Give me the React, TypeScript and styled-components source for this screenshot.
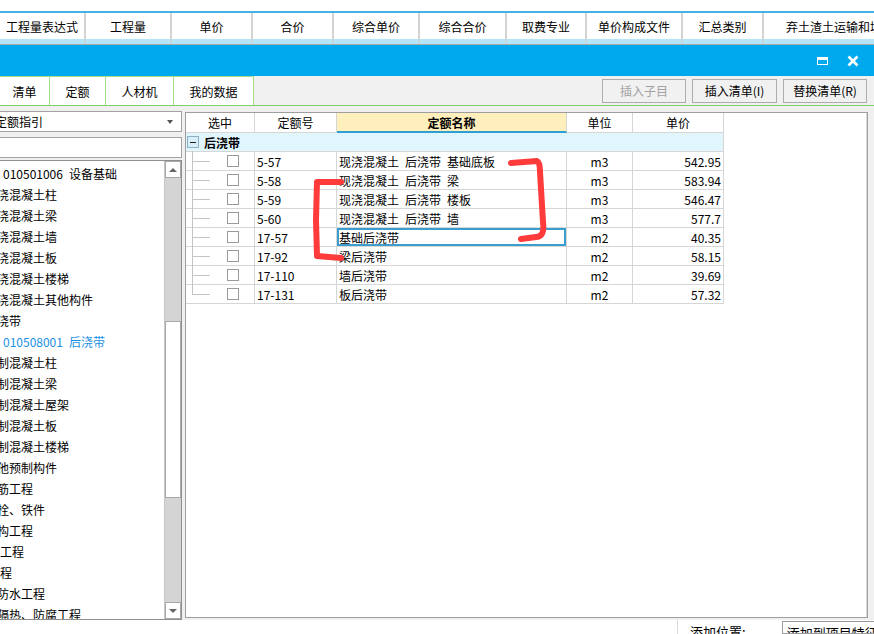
import React from 'react'
import styled, { createGlobalStyle } from 'styled-components'

const GlobalStyle = createGlobalStyle`
  html, body {
    margin: 0;
    padding: 0;
    background: #fff;
  }
  body {
    font-family: "Noto Sans CJK SC", "Noto Sans", sans-serif;
    font-size: 12px;
    color: #000;
    overflow: hidden;
  }
  * {
    box-sizing: border-box;
  }
`

const Page = styled.div`
  position: relative;
  width: 874px;
  height: 634px;
  overflow: hidden;
  display: flex;
  flex-direction: column;
  background: #fff;
`

const TopGap = styled.div`
  height: 11px;
  flex: none;
`

const GridHead = styled.div`
  flex: none;
  border-top: 2px solid #41b3e4;
  border-bottom: 1px solid #a9a9a9;
`

const HeadRow = styled.div`
  display: flex;
  height: 26px;
`

const HeadCell = styled.div<{ $w: number; $left?: boolean }>`
  flex: 0 0 ${p => p.$w}px;
  border-right: 2px solid #d3d3d3;
  display: flex;
  align-items: center;
  justify-content: ${p => (p.$left ? 'flex-start' : 'center')};
  padding-left: ${p => (p.$left ? '22px' : '0')};
  white-space: nowrap;
  overflow: hidden;
`

const StripRow = styled.div`
  display: flex;
  height: 5px;
  background: #b5e6f8;
`

const StripCell = styled.div<{ $w: number }>`
  flex: 0 0 ${p => p.$w}px;
  border-right: 2px solid #c9d6dc;
`

const TitleBar = styled.div`
  flex: none;
  height: 31px;
  background: #00a9ee;
  display: flex;
  align-items: center;
  justify-content: flex-end;
  gap: 19px;
  padding-right: 15px;
`

const MaxIcon = styled.span`
  width: 11px;
  height: 8px;
  border: 1.5px solid #fff;
  border-top-width: 3px;
`

const TabBar = styled.div`
  flex: none;
  height: 30px;
  display: flex;
  background: #f0f0f0;
  border-bottom: 1px solid #7fcf6a;
`

const Tab = styled.div<{ $w: number }>`
  width: ${p => p.$w}px;
  background: #fff;
  border-top: 1px solid #a4e08c;
  border-right: 1px solid #a4e08c;
  display: flex;
  align-items: center;
  justify-content: center;
`

const ButtonGroup = styled.div`
  margin-left: auto;
  display: flex;
  gap: 6px;
  padding-right: 7px;
  align-items: center;
`

const ToolButton = styled.button<{ $w: number }>`
  width: ${p => p.$w}px;
  height: 24px;
  background: #f1f1f1;
  border: 1px solid #adadad;
  font-family: inherit;
  font-size: 12px;
  color: ${p => (p.disabled ? '#a2a2a2' : '#000')};
  padding: 0;
`

const Body = styled.div`
  flex: none;
  height: 514px;
  display: flex;
  background: #f0f0f0;
`

const LeftPanel = styled.div`
  width: 182px;
  display: flex;
  flex-direction: column;
  padding-top: 5px;
`

const Combo = styled.div`
  height: 21px;
  background: #fff;
  border: 1px solid #a3a3a3;
  border-left: none;
  display: flex;
  align-items: center;
  overflow: hidden;
  padding-right: 8px;
`

const ComboText = styled.span`
  margin-left: -5px;
  white-space: nowrap;
  flex: 1;
`

const ComboArrow = styled.span`
  width: 0;
  height: 0;
  border-left: 3.5px solid transparent;
  border-right: 3.5px solid transparent;
  border-top: 4px solid #555;
`

const SearchBox = styled.div`
  height: 21px;
  margin-top: 5px;
  background: #fff;
  border: 1px solid #a3a3a3;
  border-left: none;
`

const TreeList = styled.div`
  margin-top: 2px;
  height: 460px;
  display: flex;
  background: #fff;
  border: 1px solid #8f8f8f;
  border-left: none;
`

const TreeItems = styled.div`
  flex: 1;
  overflow: hidden;
  padding-top: 2px;
`

const TreeItem = styled.div<{ $indent: number; $active?: boolean }>`
  height: 21px;
  line-height: 21px;
  white-space: nowrap;
  margin-left: ${p => p.$indent}px;
  color: ${p => (p.$active ? '#1a8fe3' : '#000')};
`

const CodeText = styled.span`
  display: inline-block;
  width: 66px;
`

const ScrollBar = styled.div`
  width: 17px;
  display: flex;
  flex-direction: column;
  background: #d4d4d4;
  border-left: 1px solid #c8c8c8;
`

const ScrollArrow = styled.div<{ $down?: boolean }>`
  height: 17px;
  flex: none;
  background: #fff;
  border: 1px solid #a9a9a9;
  display: flex;
  align-items: center;
  justify-content: center;

  &::after {
    content: '';
    width: 0;
    height: 0;
    border-left: 4px solid transparent;
    border-right: 4px solid transparent;
    ${p => (p.$down ? 'border-top: 4px solid #666;' : 'border-bottom: 4px solid #666;')}
  }
`

const ScrollTrack = styled.div<{ $h?: number }>`
  ${p => (p.$h ? `height: ${p.$h}px; flex: none;` : 'flex: 1;')}
`

const ScrollThumb = styled.div`
  height: 177px;
  flex: none;
  background: #fff;
  border: 1px solid #a9a9a9;
`

const RightPanel = styled.div`
  margin-left: 3px;
  margin-top: 6px;
  width: 683px;
  height: 506px;
  background: #fff;
  border: 1px solid #9e9e9e;
  box-shadow: inset -1px 0 0 #dcdcdc;
`

const columns = '69px 82px 230px 66px 91px'

const TableHead = styled.div`
  display: grid;
  grid-template-columns: ${columns};
  width: 538px;
  height: 20px;
`

const Th = styled.div<{ $hl?: boolean }>`
  display: flex;
  align-items: center;
  justify-content: center;
  border-right: 1px solid #d6d6d6;
  border-bottom: ${p => (p.$hl ? '2px solid #2e9fd2' : '1px solid #d6d6d6')};
  background: ${p => (p.$hl ? '#ffefbc' : '#fff')};
  font-weight: ${p => (p.$hl ? 700 : 400)};
`

const GroupRow = styled.div`
  width: 538px;
  height: 19px;
  display: flex;
  align-items: center;
  padding-left: 1px;
  background: #e1f5fd;
  border-right: 1px solid #d6d6d6;
  border-bottom: 1px solid #d6d6d6;
`

const ExpandBox = styled.span`
  width: 12px;
  height: 12px;
  background: #d8eef8;
  border: 1px solid #8fb0c2;
  display: flex;
  align-items: center;
  justify-content: center;

  &::after {
    content: '';
    width: 6px;
    border-top: 1.5px solid #222;
  }
`

const GroupLabel = styled.span`
  margin-left: 5px;
  font-weight: 700;
`

const DataRow = styled.div`
  display: grid;
  grid-template-columns: ${columns};
  width: 538px;
  height: 19px;
`

const Td = styled.div<{ $align?: 'left' | 'center' | 'right'; $selected?: boolean }>`
  display: flex;
  align-items: center;
  justify-content: ${p =>
    p.$align === 'center' ? 'center' : p.$align === 'right' ? 'flex-end' : 'flex-start'};
  padding: 0 2px;
  border-right: 1px solid #d6d6d6;
  border-bottom: 1px solid #d6d6d6;
  white-space: pre;
  box-shadow: ${p => (p.$selected ? 'inset 0 0 0 2px #3a9fd0' : 'none')};
`

const SelectCell = styled.div<{ $last?: boolean }>`
  position: relative;
  display: flex;
  align-items: center;
  border-right: 1px solid #d6d6d6;
  border-bottom: 1px solid #d6d6d6;

  &::before {
    content: '';
    position: absolute;
    left: 6px;
    top: -1px;
    height: ${p => (p.$last ? '10px' : '20px')};
    border-left: 1px solid #c4c4c4;
  }

  &::after {
    content: '';
    position: absolute;
    left: 6px;
    top: 9px;
    width: 18px;
    border-top: 1px solid #c4c4c4;
  }
`

const CheckBox = styled.span`
  margin-left: 41px;
  width: 12px;
  height: 12px;
  background: #fff;
  border: 1px solid #9a9a9a;
`

const BottomStrip = styled.div`
  flex: 1;
  display: flex;
  padding-left: 677px;
  background: #fff;
  overflow: hidden;
`

const BottomDivider = styled.div`
  border-left: 1px solid #dcdcdc;
`

const BottomLabel = styled.span`
  margin-left: 12px;
  margin-top: 5px;
  line-height: 14px;
  font-size: 13px;
  white-space: nowrap;
`

const BottomInput = styled.div`
  margin-left: 36px;
  margin-top: 1px;
  flex: 1;
  border: 1px solid #9a9a9a;
  border-right: none;
  padding: 4px 4px 0;
  line-height: 14px;
  font-size: 13px;
  white-space: nowrap;
  overflow: hidden;
`

const Annotation = styled.svg`
  position: absolute;
  left: 0;
  top: 0;
  pointer-events: none;
`

const headCols: { label: string; w: number; left?: boolean }[] = [
  { label: '工程量表达式', w: 86 },
  { label: '工程量', w: 86 },
  { label: '单价', w: 81 },
  { label: '合价', w: 81 },
  { label: '综合单价', w: 86 },
  { label: '综合合价', w: 87 },
  { label: '取费专业', w: 80 },
  { label: '单价构成文件', w: 96 },
  { label: '汇总类别', w: 81 },
  { label: '弃土渣土运输和填埋费', w: 160, left: true },
]

const treeItems: { text: string; code?: string; indent: number; active?: boolean }[] = [
  { code: '010501006', text: '设备基础', indent: 3 },
  { text: '现浇混凝土柱', indent: -15 },
  { text: '现浇混凝土梁', indent: -15 },
  { text: '现浇混凝土墙', indent: -15 },
  { text: '现浇混凝土板', indent: -15 },
  { text: '现浇混凝土楼梯', indent: -15 },
  { text: '现浇混凝土其他构件', indent: -15 },
  { text: '后浇带', indent: -15 },
  { code: '010508001', text: '后浇带', indent: 3, active: true },
  { text: '预制混凝土柱', indent: -15 },
  { text: '预制混凝土梁', indent: -15 },
  { text: '预制混凝土屋架', indent: -15 },
  { text: '预制混凝土板', indent: -15 },
  { text: '预制混凝土楼梯', indent: -15 },
  { text: '其他预制构件', indent: -15 },
  { text: '钢筋工程', indent: -15 },
  { text: '螺栓、铁件', indent: -15 },
  { text: '结构工程', indent: -15 },
  { text: '门窗工程', indent: -24 },
  { text: '拆除工程', indent: -36 },
  { text: '屋面及防水工程', indent: -39 },
  { text: '保温、隔热、防腐工程', indent: -39 },
]

const rows = [
  { code: '5-57', name: '现浇混凝土\u2002后浇带\u2002基础底板', unit: 'm3', price: '542.95' },
  { code: '5-58', name: '现浇混凝土\u2002后浇带\u2002梁', unit: 'm3', price: '583.94' },
  { code: '5-59', name: '现浇混凝土\u2002后浇带\u2002楼板', unit: 'm3', price: '546.47' },
  { code: '5-60', name: '现浇混凝土\u2002后浇带\u2002墙', unit: 'm3', price: '577.7' },
  { code: '17-57', name: '基础后浇带', unit: 'm2', price: '40.35', selected: true },
  { code: '17-92', name: '梁后浇带', unit: 'm2', price: '58.15' },
  { code: '17-110', name: '墙后浇带', unit: 'm2', price: '39.69' },
  { code: '17-131', name: '板后浇带', unit: 'm2', price: '57.32' },
]

const App = () => {
  return (
    <Page>
      <GlobalStyle />
      <TopGap />
      <GridHead>
        <HeadRow>
          {headCols.map(c => (
            <HeadCell key={c.label} $w={c.w} $left={c.left}>
              {c.label}
            </HeadCell>
          ))}
        </HeadRow>
        <StripRow>
          {headCols.map(c => (
            <StripCell key={c.label} $w={c.w} />
          ))}
        </StripRow>
      </GridHead>

      <TitleBar>
        <MaxIcon />
        <svg width="12" height="12" viewBox="0 0 12 12">
          <path d="M1.5 1.5 L10.5 10.5 M10.5 1.5 L1.5 10.5" stroke="#fff" strokeWidth="2.6" />
        </svg>
      </TitleBar>

      <TabBar>
        <Tab $w={50}>清单</Tab>
        <Tab $w={56}>定额</Tab>
        <Tab $w={68}>人材机</Tab>
        <Tab $w={80}>我的数据</Tab>
        <ButtonGroup>
          <ToolButton $w={84} disabled>插入子目</ToolButton>
          <ToolButton $w={85}>插入清单(I)</ToolButton>
          <ToolButton $w={84}>替换清单(R)</ToolButton>
        </ButtonGroup>
      </TabBar>

      <Body>
        <LeftPanel>
          <Combo>
            <ComboText>定额指引</ComboText>
            <ComboArrow />
          </Combo>
          <SearchBox />
          <TreeList>
            <TreeItems>
              {treeItems.map((item, i) => (
                <TreeItem key={i} $indent={item.indent} $active={item.active}>
                  {item.code && <CodeText>{item.code}</CodeText>}
                  {item.text}
                </TreeItem>
              ))}
            </TreeItems>
            <ScrollBar>
              <ScrollArrow />
              <ScrollTrack $h={143} />
              <ScrollThumb />
              <ScrollTrack />
              <ScrollArrow $down />
            </ScrollBar>
          </TreeList>
        </LeftPanel>

        <RightPanel>
          <TableHead>
            <Th>选中</Th>
            <Th>定额号</Th>
            <Th $hl>定额名称</Th>
            <Th>单位</Th>
            <Th>单价</Th>
          </TableHead>
          <GroupRow>
            <ExpandBox />
            <GroupLabel>后浇带</GroupLabel>
          </GroupRow>
          {rows.map((r, i) => (
            <DataRow key={r.code}>
              <SelectCell $last={i === rows.length - 1}>
                <CheckBox />
              </SelectCell>
              <Td>{r.code}</Td>
              <Td $selected={r.selected}>{r.name}</Td>
              <Td $align="center">{r.unit}</Td>
              <Td $align="right">{r.price}</Td>
            </DataRow>
          ))}
        </RightPanel>
      </Body>

      <BottomStrip>
        <BottomDivider />
        <BottomLabel>添加位置:</BottomLabel>
        <BottomInput>添加到项目特征列</BottomInput>
      </BottomStrip>

      <Annotation width="874" height="634" viewBox="0 0 874 634">
        <g fill="none" stroke="#ff3b3b" strokeWidth="6" strokeLinecap="round" strokeLinejoin="round">
          <path d="M511 163 L537 161 Q540 162 540 172 L543 222 Q545 237 536 237 L521 239" />
          <path d="M341 182 L317 182 L316 220 L317 256 L341 258" />
        </g>
      </Annotation>
    </Page>
  )
}

export default App
